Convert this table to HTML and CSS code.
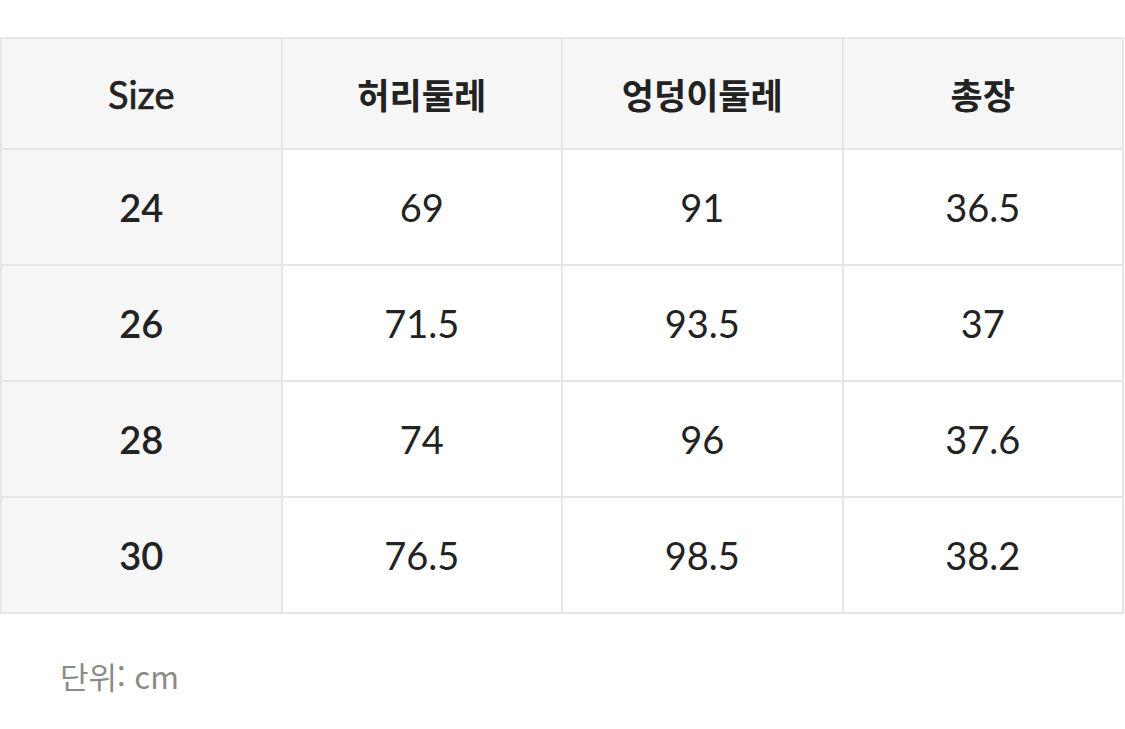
FILE: index.html
```html
<!DOCTYPE html>
<html lang="ko">
<head>
<meta charset="utf-8">
<link rel="stylesheet" href="styles.css">
</head>
<body>
<div class="page">
  <table class="size-table">
    <thead>
      <tr>
        <th>Size</th>
        <th class="ko">허리둘레</th>
        <th class="ko">엉덩이둘레</th>
        <th class="ko">총장</th>
      </tr>
    </thead>
    <tbody>
      <tr><th>24</th><td>69</td><td>91</td><td>36.5</td></tr>
      <tr><th>26</th><td>71.5</td><td>93.5</td><td>37</td></tr>
      <tr><th>28</th><td>74</td><td>96</td><td>37.6</td></tr>
      <tr><th>30</th><td>76.5</td><td>98.5</td><td>38.2</td></tr>
    </tbody>
  </table>
  <p class="unit">단위: cm</p>
</div>
</body>
</html>
```
FILE: styles.css
```css
html, body {
  margin: 0;
  padding: 0;
  background: #ffffff;
}
.page {
  padding-top: 37px;
  font-family: Lato, "Noto Sans CJK KR", sans-serif;
  color: #222222;
}
.size-table {
  width: 1124px;
  border-collapse: collapse;
  table-layout: fixed;
}
.size-table th,
.size-table td {
  border: 2px solid #e6e6e6;
  text-align: center;
  vertical-align: middle;
  font-size: 38px;
  height: 114px;
  padding: 0;
}
.size-table thead th {
  background: #f6f6f6;
  font-weight: 400;
  -webkit-text-stroke: 0.6px #222222;
  height: 109px;
}
.size-table thead th.ko {
  font-size: 35px;
  font-weight: 700;
  -webkit-text-stroke: 0;
}
.size-table tbody th {
  background: #f6f6f6;
  font-weight: 600;
}
.size-table td {
  background: #ffffff;
  font-weight: 400;
}
.unit {
  margin: 39px 0 0 60px;
  font-size: 31px;
  color: #8a8a8a;
  font-family: "Noto Sans CJK KR", sans-serif;
  line-height: 46px;
}
```
